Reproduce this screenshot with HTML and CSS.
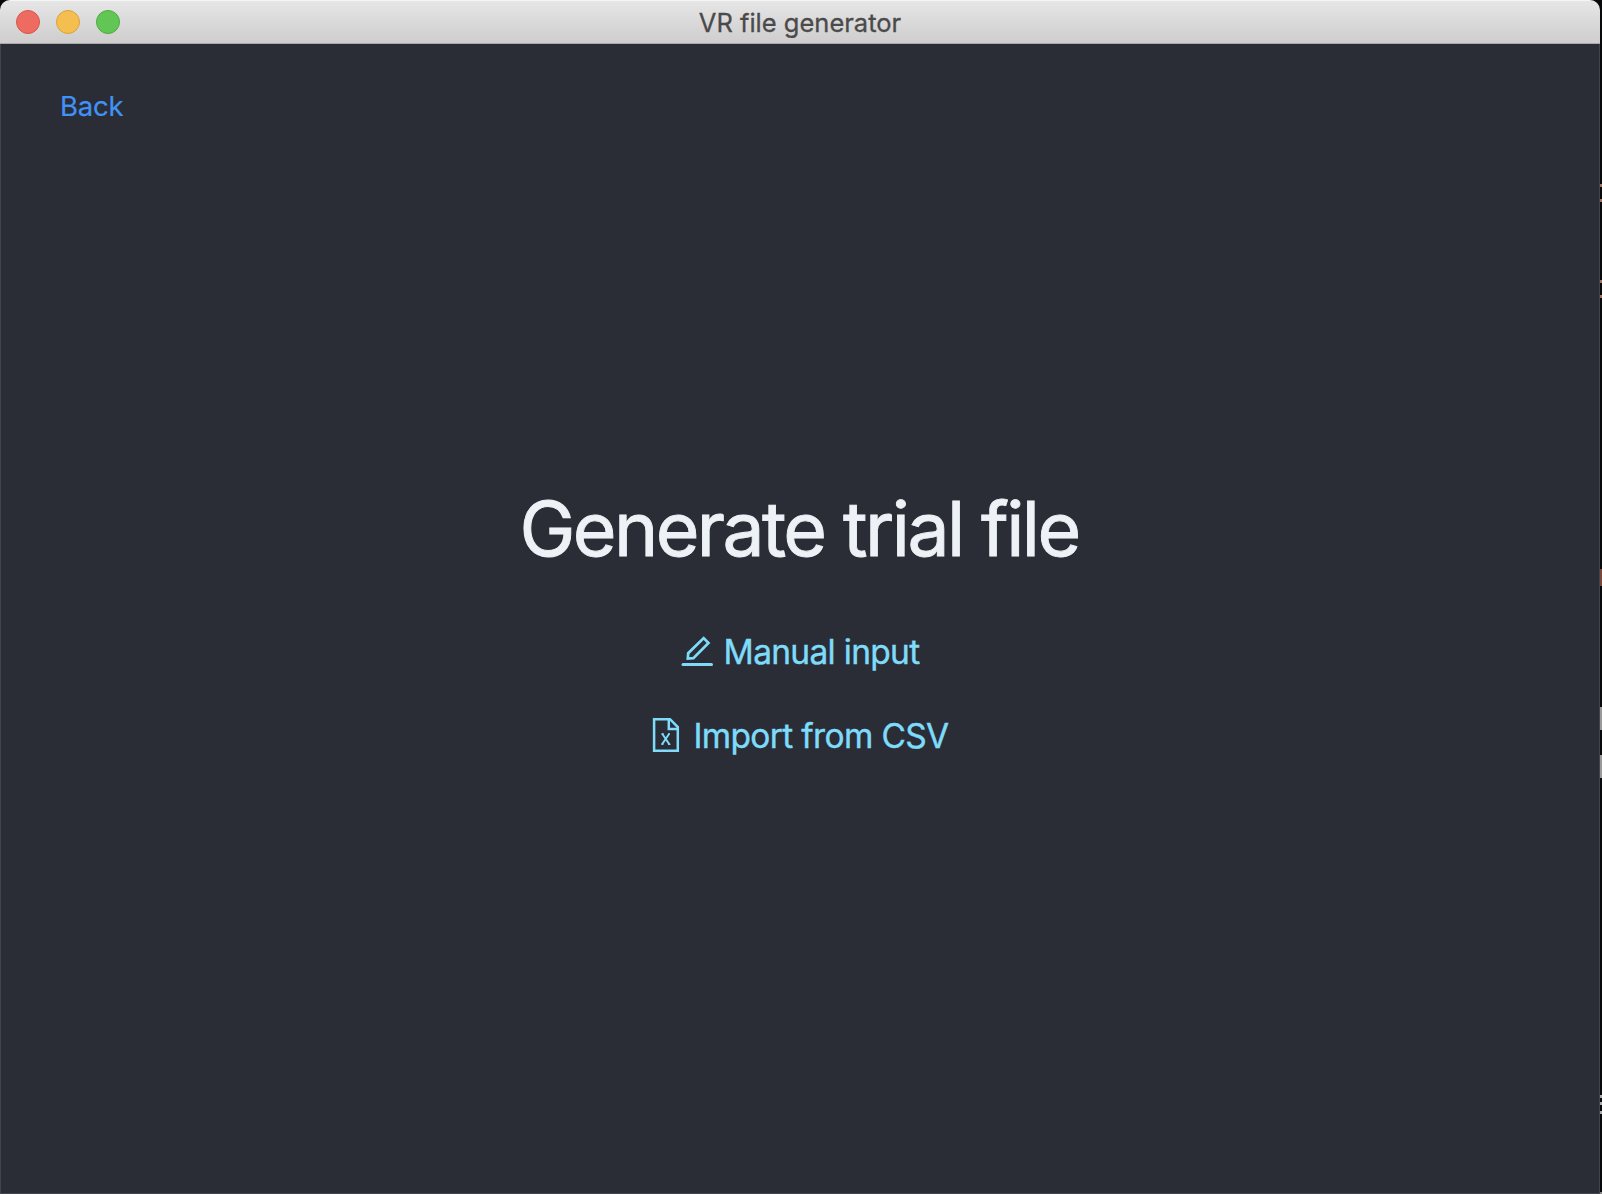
FILE: index.html
```html
<!DOCTYPE html>
<html lang="en">
<head>
<meta charset="utf-8">
<title>VR file generator</title>
<link rel="stylesheet" href="styles.css">
</head>
<body>
<div class="window">
  <header class="titlebar">
    <div class="controls">
      <span class="dot close"></span>
      <span class="dot minimize"></span>
      <span class="dot zoom"></span>
    </div>
    <div class="window-title">VR file generator</div>
  </header>
  <main class="screen">
    <nav class="nav"><a class="back">Back</a></nav>
    <section class="content">
      <h1 class="heading">Generate trial file</h1>
      <a class="action manual">
        <svg class="icon" width="32" height="36" viewBox="11 8 32 36" fill="none" stroke="currentColor" stroke-width="2.7">
          <path d="M33.7 13.1 38.5 18 23.4 33.2 17.8 33.5 18.2 28.2Z"/>
          <path d="M13 39.6H41.5" stroke-width="3" stroke-linecap="round"/>
        </svg>
        <span class="label">Manual input</span>
      </a>
      <a class="action import">
        <svg class="icon" width="28" height="36" viewBox="8 7 28 36" fill="none" stroke="currentColor" stroke-width="2.5">
          <path d="M10.1 9.2H26L33.8 17V40.8H10.1Z"/>
          <path d="M24.8 9V18.9H34"/>
          <path d="M18.2 23.8 25.4 34.4M25.2 23.8 18 34.4" stroke-width="1.9"/>
          <path d="M17.4 23.9H19.8M24 23.9H26M17.4 34.3H19.4M24 34.3H26.4" stroke-width="1.2"/>
        </svg>
        <span class="label">Import from CSV</span>
      </a>
    </section>
  </main>
</div>
<aside class="backdrop">
  <i class="mark m1"></i><i class="mark m2"></i><i class="mark m3"></i><i class="mark m4"></i>
  <i class="mark m5"></i><i class="mark m6"></i><i class="mark m7"></i>
  <i class="mark m8"></i><i class="mark m9"></i><i class="mark m10"></i><i class="mark m11"></i>
</aside>
</body>
</html>
```
FILE: styles.css
```css
* { box-sizing: border-box; }
body {
  margin: 0;
  width: 1602px;
  height: 1194px;
  display: flex;
  overflow: hidden;
  background: #08090b;
  font-family: Inter, sans-serif;
}
.window {
  width: 1600px;
  height: 1194px;
  display: flex;
  flex-direction: column;
  border-radius: 10px 10px 0 0;
  overflow: hidden;
  background: #2a2d35;
}
.titlebar {
  height: 44px;
  display: grid;
  grid-template-columns: 120px 1fr 120px;
  align-items: center;
  background: linear-gradient(#e6e6e6, #cfcdce);
  border-top: 1px solid #f5f5f5;
  border-bottom: 1px solid #aaa9aa;
}
.controls { display: flex; gap: 16px; padding-left: 16px; }
.dot { width: 24px; height: 24px; flex: none; border-radius: 50%; border: 1px solid; }
.close { background: #ed6b60; border-color: #d9554d; }
.minimize { background: #f5bf50; border-color: #d8a040; }
.zoom { background: #62c655; border-color: #4eaa3e; }
.window-title {
  padding-top: 1px;
  text-align: center;
  color: #4b4a4b;
  font-size: 25.5px;
  -webkit-text-stroke: 0.3px currentColor;
  line-height: 30px;
}
.screen {
  flex: 1;
  display: flex;
  flex-direction: column;
  border: 1px solid #42454c;
  border-top: 0;
}
.nav { height: 124px; padding: 46px 0 0 59px; }
.back {
  color: #4192f7;
  font-size: 27.5px;
  line-height: 33px;
  letter-spacing: -0.2px;
  -webkit-text-stroke: 0.2px currentColor;
}
.content { display: flex; flex-direction: column; align-items: center; padding-top: 311px; }
.heading {
  margin: 0 2px 0 0;
  color: #edf2f7;
  font-size: 75px;
  line-height: 100px;
  font-weight: 400;
  letter-spacing: -2.57px;
  -webkit-text-stroke: 0.9px currentColor;
}
.action { display: flex; align-items: center; color: #7fdbfa; font-size: 33.5px; line-height: 44px; }
.label { padding-top: 1px; margin-bottom: -1px; letter-spacing: -0.7px; -webkit-text-stroke: 0.4px currentColor; }
.manual { height: 44px; gap: 11px; margin-top: 50px; }
.import { height: 44px; gap: 13px; margin: 40px 0 0 1px; }
.import .label { letter-spacing: -0.65px; }
.icon { display: block; flex: none; }
.backdrop { position: relative; width: 2px; background: #08090b; }
.mark { position: absolute; left: 0; width: 2px; height: 3px; background: #a07362; }
.m1 { top: 184px; }
.m2 { top: 199px; }
.m3 { top: 280px; }
.m4 { top: 295px; }
.m5 { top: 569px; height: 17px; background: #79483b; }
.m6 { top: 707px; height: 23px; background: #999; }
.m7 { top: 755px; height: 23px; background: #999; }
.m8 { top: 1095px; background: #aaa; }
.m9 { top: 1102px; background: #aaa; }
.m10 { top: 1111px; background: #aaa; }
.m11 { top: 1192px; height: 2px; background: #888; }
```
